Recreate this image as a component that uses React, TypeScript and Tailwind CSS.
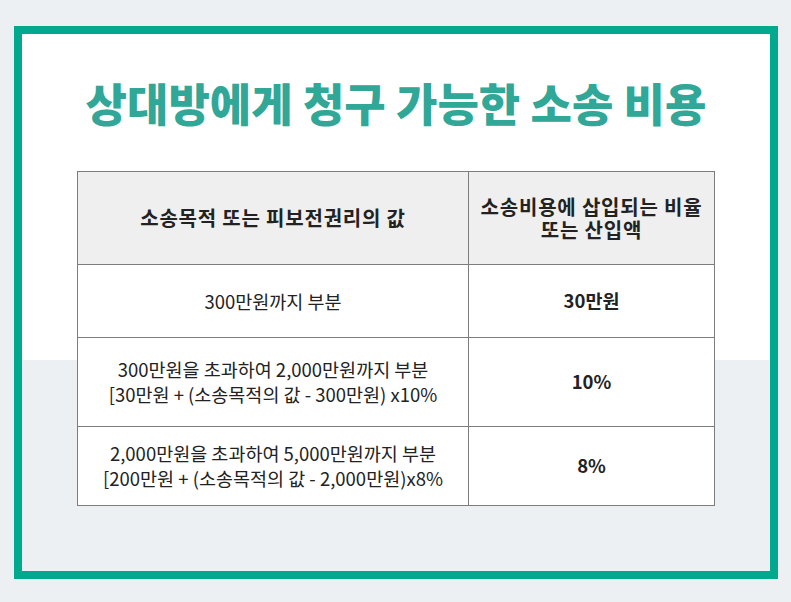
import React from "react";

const rows = [
  { left: ["300만원까지 부분"], right: "30만원", h: "h-[73px]" },
  {
    left: ["300만원을 초과하여 2,000만원까지 부분", "[30만원 + (소송목적의 값 - 300만원) x10%"],
    right: "10%",
    h: "h-[89px]",
  },
  {
    left: ["2,000만원을 초과하여 5,000만원까지 부분", "[200만원 + (소송목적의 값 - 2,000만원)x8%"],
    right: "8%",
    h: "h-[78px]",
  },
];

export default function App() {
  return (
    <div
      className="min-h-[602px] bg-[#edf0f3] pt-[26px] pl-[14px]"
      style={{ fontFamily: '"Noto Sans CJK KR", "Noto Sans", sans-serif' }}
    >
      <div className="w-[764px] h-[553px] border-[8px] border-[#00a88e] bg-[linear-gradient(to_bottom,#ffffff_326px,#edf0f3_326px)]">
        {/* 제목 */}
        <h1 className="pt-[46px] text-center text-[45px] leading-[45px] font-black text-[#30a797]">
          상대방에게 청구 가능한 소송 비용
        </h1>

        {/* 표 */}
        <div className="mx-[55px] mt-[46px] border border-[#7d7d7d] bg-white text-[#222]">
          <div className="grid grid-cols-[391px_1fr] h-[93px] bg-[#efefef] border-b border-[#7d7d7d] font-bold text-[20px] tracking-[0.8px]">
            <div className="flex items-center justify-center border-r border-[#7d7d7d]">
              소송목적 또는 피보전권리의 값
            </div>
            <div className="flex flex-col items-center justify-center leading-[23px] text-center">
              <span>소송비용에 삽입되는 비율</span>
              <span>또는 산입액</span>
            </div>
          </div>
          {rows.map((row, i) => (
            <div
              key={i}
              className={`grid grid-cols-[391px_1fr] ${row.h} text-[18.5px] ${
                i < rows.length - 1 ? "border-b border-[#7d7d7d]" : ""
              }`}
            >
              <div className="flex flex-col items-center justify-center border-r border-[#7d7d7d] leading-[25px] text-center">
                {row.left.map((t) => (
                  <span key={t}>{t}</span>
                ))}
              </div>
              <div className="flex items-center justify-center font-bold">
                {row.right}
              </div>
            </div>
          ))}
        </div>
      </div>
    </div>
  );
}
